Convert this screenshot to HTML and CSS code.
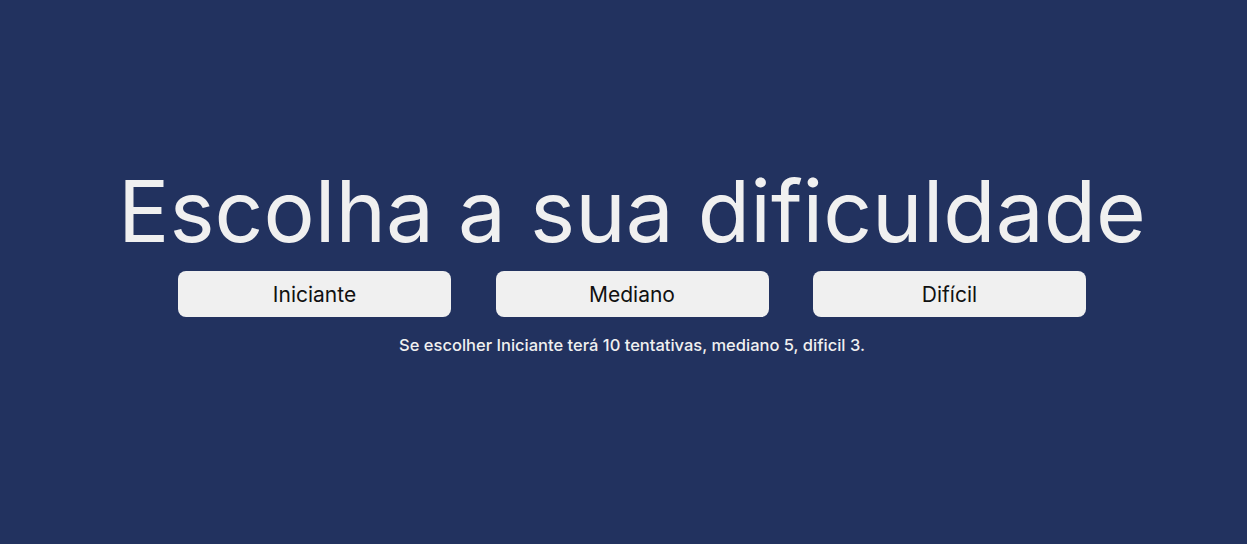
FILE: index.html
```html
<!DOCTYPE html>
<html lang="pt-BR">
<head>
<meta charset="utf-8">
<title>Escolha a sua dificuldade</title>
<link rel="stylesheet" href="styles.css">
</head>
<body>
<main class="screen">
  <h1 class="title">Escolha a sua dificuldade</h1>
  <div class="levels">
    <button class="level">Iniciante</button>
    <button class="level">Mediano</button>
    <button class="level">Difícil</button>
  </div>
  <p class="hint">Se escolher Iniciante terá 10 tentativas, mediano 5, dificil 3.</p>
</main>
</body>
</html>
```
FILE: styles.css
```css
html, body {
  margin: 0;
  padding: 0;
  height: 100%;
}
body {
  background: #22325f;
  font-family: Inter, "Noto Sans", sans-serif;
  color: #f0f0f0;
}
.screen {
  height: 100%;
  box-sizing: border-box;
  padding-left: 17px;
  padding-bottom: 26px;
  display: flex;
  flex-direction: column;
  align-items: center;
  justify-content: center;
}
.title {
  margin: 0;
  font-size: 85.5px;
  font-weight: 400;
  line-height: 100px;
}
.levels {
  width: 908px;
  display: flex;
  justify-content: space-between;
  margin-top: 10px;
}
.level {
  width: 273px;
  height: 46px;
  border: none;
  border-radius: 8px;
  background: #f0f0f0;
  color: #111;
  font-family: inherit;
  font-size: 21px;
  font-weight: 400;
  padding: 0;
}
.hint {
  margin: 16px 0 0;
  font-size: 16.5px;
  font-weight: 500;
  line-height: 24px;
}
```
